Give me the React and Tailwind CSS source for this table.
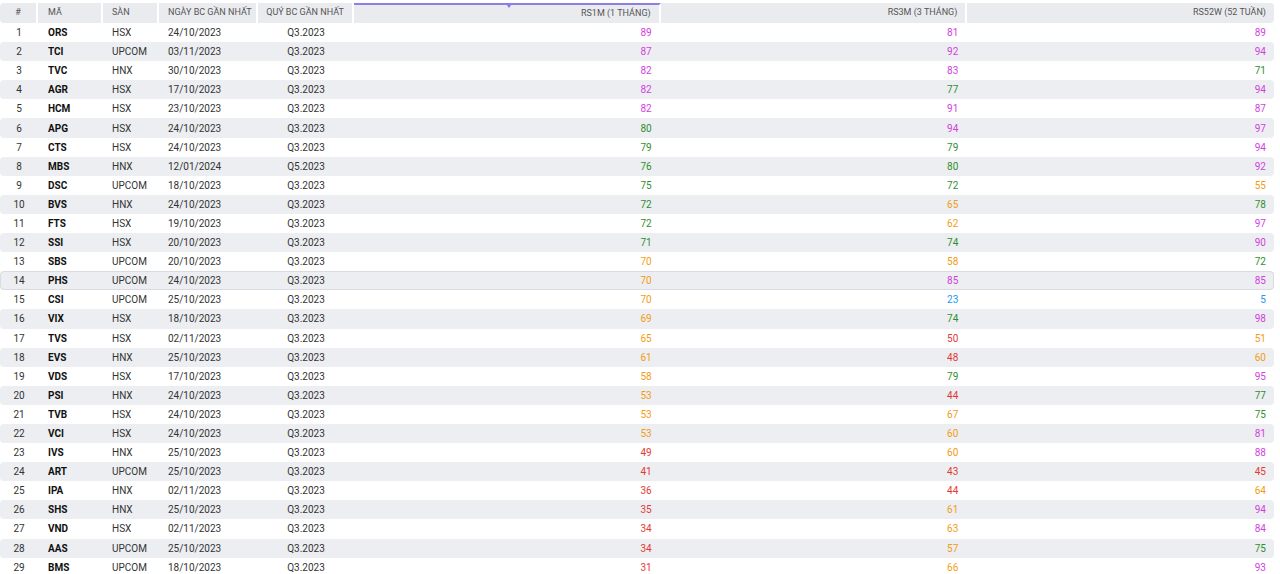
import React from 'react';

const rows = [
  ['ORS', 'HSX', '24/10/2023', 'Q3.2023', 89, 81, 89],
  ['TCI', 'UPCOM', '03/11/2023', 'Q3.2023', 87, 92, 94],
  ['TVC', 'HNX', '30/10/2023', 'Q3.2023', 82, 83, 71],
  ['AGR', 'HSX', '17/10/2023', 'Q3.2023', 82, 77, 94],
  ['HCM', 'HSX', '23/10/2023', 'Q3.2023', 82, 91, 87],
  ['APG', 'HSX', '24/10/2023', 'Q3.2023', 80, 94, 97],
  ['CTS', 'HSX', '24/10/2023', 'Q3.2023', 79, 79, 94],
  ['MBS', 'HNX', '12/01/2024', 'Q5.2023', 76, 80, 92],
  ['DSC', 'UPCOM', '18/10/2023', 'Q3.2023', 75, 72, 55],
  ['BVS', 'HNX', '24/10/2023', 'Q3.2023', 72, 65, 78],
  ['FTS', 'HSX', '19/10/2023', 'Q3.2023', 72, 62, 97],
  ['SSI', 'HSX', '20/10/2023', 'Q3.2023', 71, 74, 90],
  ['SBS', 'UPCOM', '20/10/2023', 'Q3.2023', 70, 58, 72],
  ['PHS', 'UPCOM', '24/10/2023', 'Q3.2023', 70, 85, 85],
  ['CSI', 'UPCOM', '25/10/2023', 'Q3.2023', 70, 23, 5],
  ['VIX', 'HSX', '18/10/2023', 'Q3.2023', 69, 74, 98],
  ['TVS', 'HSX', '02/11/2023', 'Q3.2023', 65, 50, 51],
  ['EVS', 'HNX', '25/10/2023', 'Q3.2023', 61, 48, 60],
  ['VDS', 'HSX', '17/10/2023', 'Q3.2023', 58, 79, 95],
  ['PSI', 'HNX', '24/10/2023', 'Q3.2023', 53, 44, 77],
  ['TVB', 'HSX', '24/10/2023', 'Q3.2023', 53, 67, 75],
  ['VCI', 'HSX', '24/10/2023', 'Q3.2023', 53, 60, 81],
  ['IVS', 'HNX', '25/10/2023', 'Q3.2023', 49, 60, 88],
  ['ART', 'UPCOM', '25/10/2023', 'Q3.2023', 41, 43, 45],
  ['IPA', 'HNX', '02/11/2023', 'Q3.2023', 36, 44, 64],
  ['SHS', 'HNX', '25/10/2023', 'Q3.2023', 35, 61, 94],
  ['VND', 'HSX', '02/11/2023', 'Q3.2023', 34, 63, 84],
  ['AAS', 'UPCOM', '25/10/2023', 'Q3.2023', 34, 57, 75],
  ['BMS', 'UPCOM', '18/10/2023', 'Q3.2023', 31, 66, 93],
];

const rsColor = (v) => {
  if (v > 80) return 'text-[#d23fe0]';
  if (v > 70) return 'text-[#2f8f2f]';
  if (v > 50) return 'text-[#f39c12]';
  if (v > 30) return 'text-[#e53935]';
  return 'text-[#2196f3]';
};

const cols = 'grid grid-cols-[38px_65px_56px_99px_96px_1fr_1fr_1fr]';

const RsTable = () => {
  return (
    <div className="rs-table w-[1274px] pt-[3px] bg-white font-['Roboto',sans-serif]">
      <div className={`${cols} h-[20px] text-[9px] text-[#555] uppercase items-stretch`}>
        <div className="bg-[#eaebef] border-r-2 border-white rounded-l flex items-center justify-center">#</div>
        <div className="bg-[#eaebef] border-r-2 border-white flex items-center pl-[10px]">Mã</div>
        <div className="bg-[#eaebef] border-r-2 border-white flex items-center pl-[9px]">Sàn</div>
        <div className="bg-[#eaebef] border-r-2 border-white flex items-center pl-[9px]">Ngày BC gần nhất</div>
        <div className="bg-[#eaebef] border-r-2 border-white flex items-center justify-center">Quý BC gần nhất</div>
        <div className="relative bg-[#eaebef] border-r-2 border-white border-t-2 border-t-[#8c7ee8] flex items-center justify-end pr-[8px]">
          <span className="absolute left-1/2 -top-[1px] w-0 h-0 border-l-[3px] border-r-[3px] border-t-[4px] border-l-transparent border-r-transparent border-t-[#8c7ee8]" />
          RS1M (1 tháng)
        </div>
        <div className="bg-[#eaebef] border-r-2 border-white flex items-center justify-end pr-[8px]">RS3M (3 tháng)</div>
        <div className="bg-[#eaebef] rounded-r flex items-center justify-end pr-[8px]">RS52W (52 tuần)</div>
      </div>

      {rows.map((r, i) => {
        const n = i + 1;
        const striped = n % 2 === 0;
        const hovered = n === 14;
        return (
          <div
            key={r[0]}
            className={`${cols} h-[19.1px] items-center text-[10px] text-[#333] rounded ${striped ? 'bg-[#eceef1]' : 'bg-white'} ${hovered ? 'outline outline-1 outline-[#d9dbe0] -outline-offset-1' : ''}`}
          >
            <div className="text-center">{n}</div>
            <div className="pl-[10px] font-bold text-[#111]">{r[0]}</div>
            <div className="pl-[9px]">{r[1]}</div>
            <div className="pl-[9px]">{r[2]}</div>
            <div className="text-center">{r[3]}</div>
            <div className={`text-right pr-[9px] ${rsColor(r[4])}`}>{r[4]}</div>
            <div className={`text-right pr-[9px] ${rsColor(r[5])}`}>{r[5]}</div>
            <div className={`text-right pr-[8px] ${rsColor(r[6])}`}>{r[6]}</div>
          </div>
        );
      })}
    </div>
  );
};

export default function App() {
  return (
    <div className="w-[1280px] h-[574px] overflow-hidden bg-white">
      <RsTable />
    </div>
  );
}
